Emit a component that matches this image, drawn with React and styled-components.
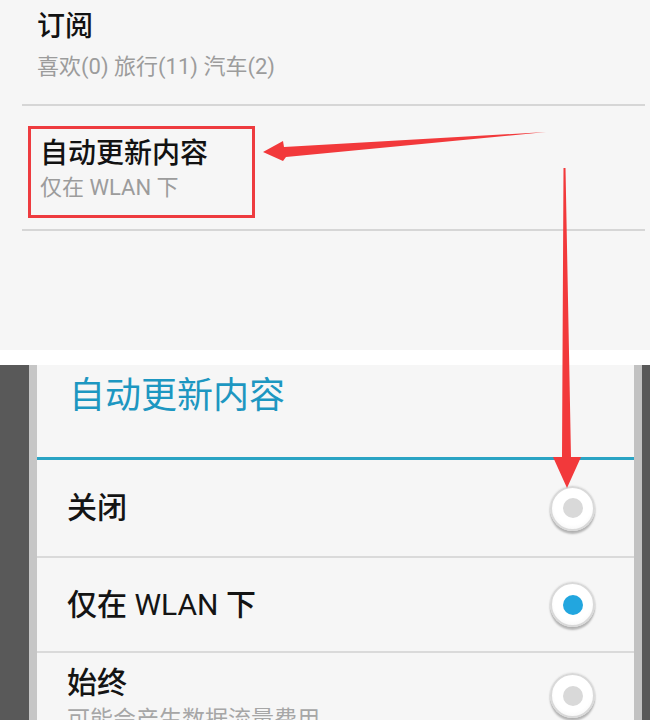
import styled, { createGlobalStyle } from "styled-components"

const GlobalStyle = createGlobalStyle`
  html, body {
    margin: 0;
    padding: 0;
    background: #595959;
  }
  body {
    font-family: Roboto, "Noto Sans CJK SC", sans-serif;
  }
`

const Page = styled.div`
  position: relative;
  width: 650px;
  height: 720px;
  overflow: hidden;
  display: flex;
  flex-direction: column;
`

const TopPanel = styled.div`
  height: 350px;
  flex: none;
  background: #f6f6f6;
  padding: 0 5px 0 22px;
  box-sizing: border-box;
`

const PrefRow = styled.div`
  height: ${p => p.h}px;
  box-sizing: border-box;
  border-bottom: 2px solid #d6d6d6;
  padding: ${p => p.pt}px 0 0 ${p => p.pl}px;
`

const Highlight = styled.div`
  display: inline-block;
  border: 3px solid #ee3b3f;
  padding: 7px 9px 13px 9px;
  width: 227px;
  box-sizing: border-box;
`

const PrefTitle = styled.div`
  font-size: 28px;
  line-height: 36px;
  font-weight: 500;
  color: #121212;
`

const PrefSummary = styled.div`
  font-size: 22px;
  line-height: 28px;
  color: #9c9c9c;
  margin-top: ${p => p.gap || 4}px;
`

const Strip = styled.div`
  height: 15px;
  flex: none;
  background: #ffffff;
`

const DarkArea = styled.div`
  flex: 1;
  background: #595959;
  padding: 0 8px 0 29px;
  display: flex;
`

const Dialog = styled.div`
  flex: 1;
  background: #f6f6f6;
  border-left: 8px solid #c6c6c6;
  border-right: 8px solid #c2c2c2;
  display: flex;
  flex-direction: column;
`

const DialogTitle = styled.div`
  height: 95px;
  flex: none;
  box-sizing: border-box;
  padding: 9px 0 0 32px;
  font-size: 36px;
  line-height: 44px;
  color: #1d97c1;
  border-bottom: 3px solid #2ba4c4;
`

const Option = styled.div`
  height: ${p => p.h || 97}px;
  flex: none;
  box-sizing: border-box;
  border-bottom: 2px solid #dadada;
  display: flex;
  align-items: ${p => (p.top ? "flex-start" : "center")};
  justify-content: space-between;
  padding: ${p => (p.top ? "11px 39px 0 30px" : "0 39px 0 30px")};
`

const OptionText = styled.div`
  display: flex;
  flex-direction: column;
`

const OptionLabel = styled.div`
  font-size: 30px;
  line-height: 38px;
  font-weight: 500;
  color: #141414;
`

const Latin = styled.span`
  font-weight: 400;
`

const OptionHint = styled.div`
  font-size: 23px;
  line-height: 30px;
  color: #a6a6a6;
  margin-top: 3px;
  white-space: nowrap;
`

const Radio = styled.div`
  width: 45px;
  height: 45px;
  border-radius: 50%;
  flex: none;
  box-sizing: border-box;
  background: radial-gradient(circle at 50% 45%, #ffffff 60%, #eeeeee 100%);
  border: 2px solid #d9d9d9;
  box-shadow: 0 3px 2px rgba(0, 0, 0, 0.25), 0 0 1px 1px #ebebeb;
  display: flex;
  align-items: center;
  justify-content: center;
  margin-top: ${p => p.mt || 0}px;

  &::after {
    content: "";
    width: 20px;
    height: 20px;
    border-radius: 50%;
    background: ${p => (p.checked ? "#22a6df" : "#d9d9d9")};
  }
`

const Annotations = styled.svg`
  position: absolute;
  left: 0;
  top: 0;
  pointer-events: none;
`

const options = [
  { label: "关闭", checked: false, h: 98 },
  { label: <>仅在 <Latin>WLAN</Latin> 下</>, key: "wlan", checked: true, h: 95 },
]

export default function App() {
  return (
    <Page>
      <GlobalStyle />
      <TopPanel>
        <PrefRow h={106} pt={9} pl={15}>
          <PrefTitle>订阅</PrefTitle>
          <PrefSummary gap={8}>喜欢(0) 旅行(11) 汽车(2)</PrefSummary>
        </PrefRow>
        <PrefRow h={125} pt={20} pl={6}>
          <Highlight>
            <PrefTitle>自动更新内容</PrefTitle>
            <PrefSummary gap={2}>仅在 WLAN 下</PrefSummary>
          </Highlight>
        </PrefRow>
      </TopPanel>
      <Strip />
      <DarkArea>
        <Dialog>
          <DialogTitle>自动更新内容</DialogTitle>
          {options.map((o, i) => (
            <Option key={i} h={o.h}>
              <OptionLabel>{o.label}</OptionLabel>
              <Radio checked={o.checked} />
            </Option>
          ))}
          <Option top h={120}>
            <OptionText>
              <OptionLabel>始终</OptionLabel>
              <OptionHint>可能会产生数据流量费用</OptionHint>
            </OptionText>
            <Radio mt={9} />
          </Option>
        </Dialog>
      </DarkArea>
      <Annotations width="650" height="720" viewBox="0 0 650 720">
        <polygon
          points="263,152 283,141 284,147 546,132 286,157 283,161"
          fill="#f2393b"
        />
        <polygon
          points="563.5,168 565.5,168 571,457 581,457 567,488 553,457 562,457"
          fill="#f2393b"
        />
      </Annotations>
    </Page>
  )
}
